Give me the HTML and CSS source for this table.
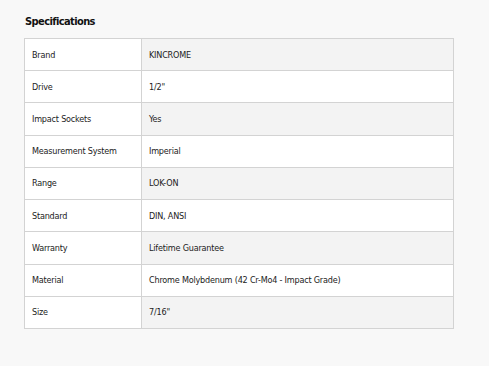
FILE: index.html
```html
<!DOCTYPE html>
<html>
<head>
<meta charset="utf-8">
<link rel="stylesheet" href="styles.css">
</head>
<body>
<section class="specs">
  <h2 class="specs-title">Specifications</h2>
  <table class="specs-table">
    <tbody>
      <tr class="odd"><td class="label">Brand</td><td class="value">KINCROME</td></tr>
      <tr><td class="label">Drive</td><td class="value">1/2"</td></tr>
      <tr class="odd"><td class="label">Impact Sockets</td><td class="value">Yes</td></tr>
      <tr><td class="label">Measurement System</td><td class="value">Imperial</td></tr>
      <tr class="odd"><td class="label">Range</td><td class="value">LOK-ON</td></tr>
      <tr><td class="label">Standard</td><td class="value">DIN, ANSI</td></tr>
      <tr class="odd"><td class="label">Warranty</td><td class="value">Lifetime Guarantee</td></tr>
      <tr><td class="label">Material</td><td class="value">Chrome Molybdenum (42 Cr-Mo4 - Impact Grade)</td></tr>
      <tr class="odd"><td class="label">Size</td><td class="value">7/16"</td></tr>
    </tbody>
  </table>
</section>
</body>
</html>
```
FILE: styles.css
```css
html, body {
  margin: 0;
  padding: 0;
  background: #f8f8f8;
}
body {
  font-family: "DejaVu Sans Condensed", "DejaVu Sans", sans-serif;
  color: #222;
}
.specs {
  padding: 14px 0 0 24px;
}
.specs-title {
  margin: 0 0 8px 1px;
  font-size: 11px;
  font-weight: bold;
  line-height: 16px;
  color: #111;
  letter-spacing: -0.6px;
}
.specs-table {
  border-collapse: collapse;
  width: 430px;
  font-size: 9px;
  letter-spacing: -0.2px;
}
.specs-table td {
  border: 1px solid #d3d3d3;
  height: 31.22px;
  padding: 0 0 0 7px;
  vertical-align: middle;
  background: #fff;
}
.specs-table td.label {
  width: 109px;
}
.specs-table tr.odd td.value {
  background: #f3f3f3;
}
```
